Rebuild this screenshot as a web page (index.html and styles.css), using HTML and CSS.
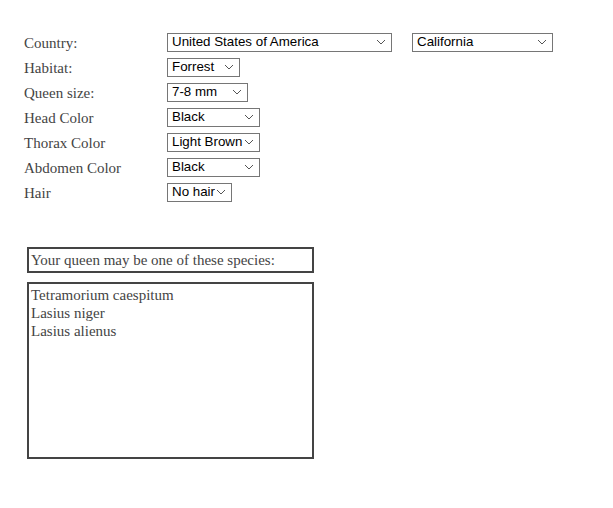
FILE: index.html
```html
<!DOCTYPE html>
<html lang="en">
<head>
    <meta charset="UTF-8">
    <meta name="viewport" content="width=device-width, initial-scale=1.0">
    <title>Queen identifier</title>
    <link rel="stylesheet" href="styles.css">
</head>
<body>
    <div class="container">
        <div class="form">
            <label>Country:</label>
            <div class="controls">
                <select class="w-country"><option>United States of America</option></select>
                <select class="w-state"><option>California</option></select>
            </div>
            <label>Habitat:</label>
            <div class="controls"><select class="w-habitat"><option>Forrest</option></select></div>
            <label>Queen size:</label>
            <div class="controls"><select class="w-size"><option>7-8 mm</option></select></div>
            <label>Head Color</label>
            <div class="controls"><select class="w-color"><option>Black</option></select></div>
            <label>Thorax Color</label>
            <div class="controls"><select class="w-color"><option>Light Brown</option></select></div>
            <label>Abdomen Color</label>
            <div class="controls"><select class="w-color"><option>Black</option></select></div>
            <label>Hair</label>
            <div class="controls"><select class="w-hair"><option>No hair</option></select></div>
        </div>

        <div class="result-title">Your queen may be one of these species:</div>
        <div class="result-list">
            <div>Tetramorium caespitum</div>
            <div>Lasius niger</div>
            <div>Lasius alienus</div>
        </div>
    </div>
</body>
</html>
```

FILE: styles.css
```css
* {
    box-sizing: border-box;
    margin: 0;
    padding: 0;
}
body {
    background-color: #ffffff;
    color: #444444;
    font-family: "Liberation Serif", "DejaVu Serif", serif;
    font-size: 15px;
}
.container {
    padding: 32px 0 0 24px;
}
.form {
    display: grid;
    grid-template-columns: 143px auto;
    grid-auto-rows: 20px;
    row-gap: 5px;
    align-items: center;
}
label {
    line-height: 20px;
    position: relative;
    top: 1px;
}
.controls {
    display: flex;
    gap: 20px;
}
select {
    appearance: none;
    -webkit-appearance: none;
    height: 19px;
    border: 1px solid #767676;
    border-radius: 0;
    background-color: #ffffff;
    background-image: url("data:image/svg+xml,%3Csvg xmlns='http://www.w3.org/2000/svg' width='10' height='6'%3E%3Cpath d='M1 1l4 4 4-4' fill='none' stroke='%23555' stroke-width='1'/%3E%3C/svg%3E");
    background-repeat: no-repeat;
    background-position: right 5px center;
    padding: 0 16px 1px 4px;
    font-family: "Liberation Sans", Arial, sans-serif;
    font-size: 13.33px;
    color: #000000;
}
.w-country { width: 225px; }
.w-state { width: 141px; }
.w-habitat { width: 73px; }
.w-size { width: 81px; }
.w-color { width: 93px; }
.w-hair { width: 65px; }

.result-title {
    margin: 45px 0 0 3px;
    width: 287px;
    height: 26px;
    border: 2px solid #444444;
    padding: 3px 0 0 2px;
}
.result-list {
    margin: 9px 0 0 3px;
    width: 287px;
    height: 177px;
    border: 2px solid #444444;
    padding: 2px 0 0 2px;
    line-height: 18px;
}
```
